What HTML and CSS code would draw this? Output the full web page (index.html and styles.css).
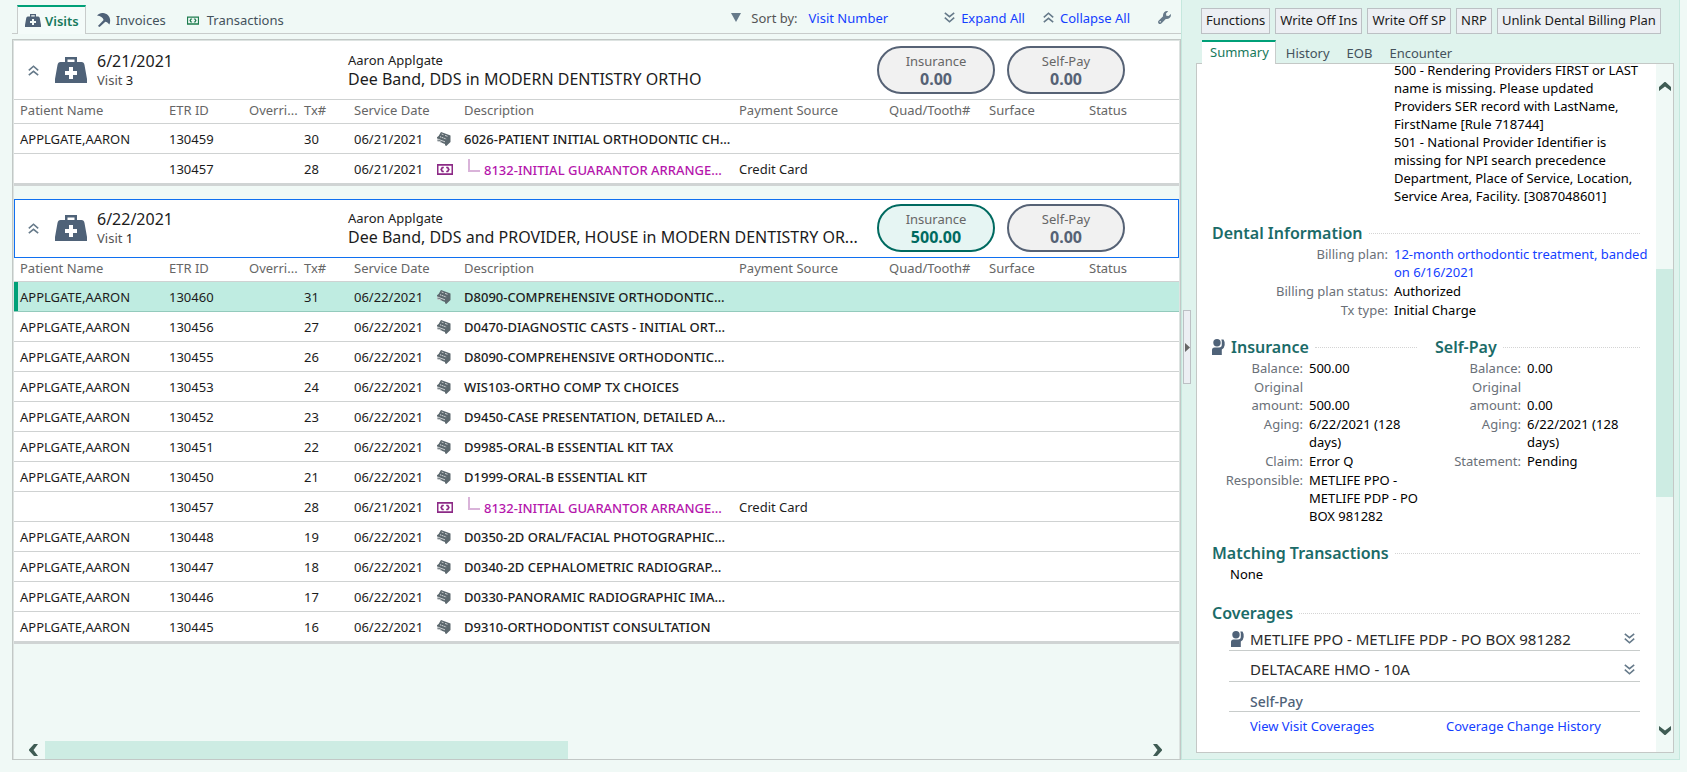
FILE: index.html
```html
<!DOCTYPE html>
<html lang="en">
<head>
<meta charset="utf-8">
<title>Visits</title>
<link rel="stylesheet" href="styles.css">
</head>
<body>
<svg class="sprite" aria-hidden="true">
  <symbol id="bag" viewBox="0 0 32 26">
    <path fill-rule="evenodd" d="M10 5V0h12v5h4.500q2.500 0 3 3L32 22v4H0v-4L2.500 8q.5-3 3-3zM12.500 5h7V2.500h-7zM14 10v4h-4v4h4v4h4v-4h4v-4h-4v-4z"/>
  </symbol>
  <symbol id="umbrella" viewBox="0 0 14 14">
    <path d="M0 2.500C3-.8 8-.8 11 2.200c2.400 2.400 2.700 6 1.400 9.300C11 9.800 9.700 9 8.300 8.700L2.600 14 .9 13 6.600 7C6 4.700 3.500 2.700 0 2.500z"/>
  </symbol>
  <symbol id="cash" viewBox="0 0 16 11">
    <path fill-rule="evenodd" d="M0 0h16v11H0zM1.500 1.800v7.400h13V1.800z"/>
    <path d="M6.800 2.800H4.800L3.200 5.500l1.600 2.700h2V6.800h-.9L5.200 5.500l.7-1.300h.9zM9.200 2.800h2l1.600 2.700-1.600 2.700h-2V6.800h.9l.7-1.300-.7-1.300h-.9z"/>
  </symbol>
  <symbol id="sheets" viewBox="0 0 14 14">
    <path d="M4 0 13.500 3.600V10L9.300 14 8 13.300V12L0 9V8l1-.6L0 6.800V5.200L1.600 4z"/>
    <path fill="none" stroke="#fff" stroke-width=".8" stroke-opacity=".85" d="M4.600 2 6.500 2.700M8 3.400l2.500.9M0 6.800l8 3M0 8.600l4.500 1.700"/>
    <path fill="none" stroke="#fff" stroke-width="1" stroke-dasharray="1.200 1" d="M3.200 4.800 9.500 7.100"/>
  </symbol>
  <symbol id="down" viewBox="0 0 11 11"><path fill="none" stroke="currentColor" stroke-width="1.600" d="M.8.8 5.500 4.600 10.200.8M.8 5.600l4.700 4.200 4.700-4.200"/></symbol>
  <symbol id="up" viewBox="0 0 11 11"><path fill="none" stroke="currentColor" stroke-width="1.600" d="M.8 5.400 5.500 1.200l4.700 4.200M.8 10.200l4.700-3.800 4.700 3.800"/></symbol>
  <symbol id="person" viewBox="0 0 13 16">
    <circle cx="5" cy="3.800" r="3.700"/>
    <path d="M0 16V11q0-2.500 2.500-2.500H7q2.800 0 2.800-2.700V2.200L9.300.4H11.500q1.500 2 1.200 5.600-.3 3-2.900 4.500V16z"/>
  </symbol>
  <symbol id="wrench" viewBox="0 0 13 13">
    <path fill-rule="evenodd" d="M10.200.2 8 2.400l.3 2.300 2.300.4L12.900 3q.4 2.600-1.400 4.100-1.600 1.200-3.700.8L3.600 12.300q-1.600 1.400-3 .1-1.200-1.500.2-3L5.100 5.300Q4.600 2.900 6.200 1.200 7.900-.4 10.200.2zM1.500 10.800a.7.700 0 1 0 1.400 0 .7.700 0 1 0-1.400 0z"/>
  </symbol>
  <symbol id="chev" viewBox="0 0 9 12"><path d="M5 0h4L4.500 6 9 12H5L0 6.500v-1z"/></symbol>
</svg>

<div class="app">
  <main class="left">
    <header class="topbar">
      <nav class="tabs">
        <a class="tab active" href="#visits"><svg class="slate" width="16" height="13"><use href="#bag"/></svg>Visits</a>
        <a class="tab" href="#invoices"><svg class="slate" width="14" height="14"><use href="#umbrella"/></svg>Invoices</a>
        <a class="tab last" href="#transactions"><svg class="green" width="12" height="9"><use href="#cash"/></svg>Transactions</a>
      </nav>
      <div class="tools">
        <svg class="steel" width="10" height="9" viewBox="0 0 10 9"><path d="M0 0h10L5 9z"/></svg>
        <span class="sortlabel">Sort by:</span>
        <a class="sortby" href="#sort">Visit Number</a>
        <a class="tool" href="#expand"><svg class="steel" width="11" height="11"><use href="#down"/></svg>Expand All</a>
        <a class="tool" href="#collapse"><svg class="steel" width="11" height="11"><use href="#up"/></svg>Collapse All</a>
        <button class="plain wrench" aria-label="Settings"><svg class="steel" width="13" height="13"><use href="#wrench"/></svg></button>
      </div>
    </header>

    <section class="list">
      <article class="visit">
        <div class="visit-head">
          <button class="plain toggle" aria-label="Collapse visit 3"><svg class="steel" width="11" height="11"><use href="#up"/></svg></button>
          <svg class="slate" width="32" height="26"><use href="#bag"/></svg>
          <div class="when"><div class="big">6/21/2021</div><div class="muted">Visit <span class="ink">3</span></div></div>
          <div class="who"><div>Aaron Applgate</div><div class="big">Dee Band, DDS in MODERN DENTISTRY ORTHO</div></div>
          <button class="pill">Insurance<b>0.00</b></button>
          <button class="pill">Self-Pay<b>0.00</b></button>
        </div>
        <table class="tx">
          <colgroup><col class="c-name"><col class="c-etr"><col class="c-over"><col class="c-tx"><col class="c-date"><col class="c-icon"><col class="c-desc"><col class="c-pay"><col class="c-quad"><col class="c-surf"><col></colgroup>
          <thead><tr><th>Patient Name</th><th>ETR ID</th><th>Overri...</th><th>Tx#</th><th>Service Date</th><th></th><th>Description</th><th>Payment Source</th><th>Quad/Tooth#</th><th>Surface</th><th>Status</th></tr></thead>
          <tbody>
            <tr><td>APPLGATE,AARON</td><td>130459</td><td></td><td>30</td><td>06/21/2021</td><td><svg class="doc" width="14" height="14"><use href="#sheets"/></svg></td><td class="desc">6026-PATIENT INITIAL ORTHODONTIC CH...</td><td></td><td></td><td></td><td></td></tr>
            <tr><td></td><td>130457</td><td></td><td>28</td><td>06/21/2021</td><td><svg class="plum" width="16" height="11"><use href="#cash"/></svg></td><td class="desc child">8132-INITIAL GUARANTOR ARRANGE...</td><td>Credit Card</td><td></td><td></td><td></td></tr>
          </tbody>
        </table>
      </article>

      <article class="visit">
        <div class="visit-head focused">
          <button class="plain toggle" aria-label="Collapse visit 1"><svg class="steel" width="11" height="11"><use href="#up"/></svg></button>
          <svg class="slate" width="32" height="26"><use href="#bag"/></svg>
          <div class="when"><div class="big">6/22/2021</div><div class="muted">Visit <span class="ink">1</span></div></div>
          <div class="who"><div>Aaron Applgate</div><div class="big">Dee Band, DDS and PROVIDER, HOUSE in MODERN DENTISTRY OR...</div></div>
          <button class="pill due">Insurance<b>500.00</b></button>
          <button class="pill">Self-Pay<b>0.00</b></button>
        </div>
        <table class="tx">
          <colgroup><col class="c-name"><col class="c-etr"><col class="c-over"><col class="c-tx"><col class="c-date"><col class="c-icon"><col class="c-desc"><col class="c-pay"><col class="c-quad"><col class="c-surf"><col></colgroup>
          <thead><tr><th>Patient Name</th><th>ETR ID</th><th>Overri...</th><th>Tx#</th><th>Service Date</th><th></th><th>Description</th><th>Payment Source</th><th>Quad/Tooth#</th><th>Surface</th><th>Status</th></tr></thead>
          <tbody>
            <tr class="selected"><td>APPLGATE,AARON</td><td>130460</td><td></td><td>31</td><td>06/22/2021</td><td><svg class="doc" width="14" height="14"><use href="#sheets"/></svg></td><td class="desc">D8090-COMPREHENSIVE ORTHODONTIC...</td><td></td><td></td><td></td><td></td></tr>
            <tr><td>APPLGATE,AARON</td><td>130456</td><td></td><td>27</td><td>06/22/2021</td><td><svg class="doc" width="14" height="14"><use href="#sheets"/></svg></td><td class="desc">D0470-DIAGNOSTIC CASTS - INITIAL ORT...</td><td></td><td></td><td></td><td></td></tr>
            <tr><td>APPLGATE,AARON</td><td>130455</td><td></td><td>26</td><td>06/22/2021</td><td><svg class="doc" width="14" height="14"><use href="#sheets"/></svg></td><td class="desc">D8090-COMPREHENSIVE ORTHODONTIC...</td><td></td><td></td><td></td><td></td></tr>
            <tr><td>APPLGATE,AARON</td><td>130453</td><td></td><td>24</td><td>06/22/2021</td><td><svg class="doc" width="14" height="14"><use href="#sheets"/></svg></td><td class="desc">WIS103-ORTHO COMP TX CHOICES</td><td></td><td></td><td></td><td></td></tr>
            <tr><td>APPLGATE,AARON</td><td>130452</td><td></td><td>23</td><td>06/22/2021</td><td><svg class="doc" width="14" height="14"><use href="#sheets"/></svg></td><td class="desc">D9450-CASE PRESENTATION, DETAILED A...</td><td></td><td></td><td></td><td></td></tr>
            <tr><td>APPLGATE,AARON</td><td>130451</td><td></td><td>22</td><td>06/22/2021</td><td><svg class="doc" width="14" height="14"><use href="#sheets"/></svg></td><td class="desc">D9985-ORAL-B ESSENTIAL KIT TAX</td><td></td><td></td><td></td><td></td></tr>
            <tr><td>APPLGATE,AARON</td><td>130450</td><td></td><td>21</td><td>06/22/2021</td><td><svg class="doc" width="14" height="14"><use href="#sheets"/></svg></td><td class="desc">D1999-ORAL-B ESSENTIAL KIT</td><td></td><td></td><td></td><td></td></tr>
            <tr><td></td><td>130457</td><td></td><td>28</td><td>06/21/2021</td><td><svg class="plum" width="16" height="11"><use href="#cash"/></svg></td><td class="desc child">8132-INITIAL GUARANTOR ARRANGE...</td><td>Credit Card</td><td></td><td></td><td></td></tr>
            <tr><td>APPLGATE,AARON</td><td>130448</td><td></td><td>19</td><td>06/22/2021</td><td><svg class="doc" width="14" height="14"><use href="#sheets"/></svg></td><td class="desc">D0350-2D ORAL/FACIAL PHOTOGRAPHIC...</td><td></td><td></td><td></td><td></td></tr>
            <tr><td>APPLGATE,AARON</td><td>130447</td><td></td><td>18</td><td>06/22/2021</td><td><svg class="doc" width="14" height="14"><use href="#sheets"/></svg></td><td class="desc">D0340-2D CEPHALOMETRIC RADIOGRAP...</td><td></td><td></td><td></td><td></td></tr>
            <tr><td>APPLGATE,AARON</td><td>130446</td><td></td><td>17</td><td>06/22/2021</td><td><svg class="doc" width="14" height="14"><use href="#sheets"/></svg></td><td class="desc">D0330-PANORAMIC RADIOGRAPHIC IMA...</td><td></td><td></td><td></td><td></td></tr>
            <tr><td>APPLGATE,AARON</td><td>130445</td><td></td><td>16</td><td>06/22/2021</td><td><svg class="doc" width="14" height="14"><use href="#sheets"/></svg></td><td class="desc">D9310-ORTHODONTIST CONSULTATION</td><td></td><td></td><td></td><td></td></tr>
          </tbody>
        </table>
      </article>

      <div class="hscroll">
        <button class="plain hbtn" aria-label="Scroll left"><svg class="arrow" width="9" height="12"><use href="#chev"/></svg></button>
        <div class="htrack"><div class="hthumb"></div></div>
        <button class="plain hbtn" aria-label="Scroll right"><svg class="arrow" width="9" height="12" viewBox="0 0 9 12"><path d="M4 0H0l4.500 6L0 12h4l5-5.500v-1z"/></svg></button>
      </div>
    </section>
  </main>

  <aside class="right">
    <button class="splitter" aria-label="Hide side panel"><svg width="5" height="9" viewBox="0 0 5 9"><path fill="#666" d="M0 0l5 4.500L0 9z"/></svg></button>
    <div class="actions">
      <button class="btn">Functions</button><button class="btn">Write Off Ins</button><button class="btn">Write Off SP</button><button class="btn">NRP</button><button class="btn">Unlink Dental Billing Plan</button>
    </div>
    <nav class="subtabs">
      <a class="subtab active" href="#summary">Summary</a><a class="subtab" href="#history">History</a><a class="subtab" href="#eob">EOB</a><a class="subtab" href="#encounter">Encounter</a>
    </nav>
    <div class="summary">
      <div class="content">
        <div class="errors">
          <p>500 - Rendering Providers FIRST or LAST name is missing. Please updated Providers SER record with LastName, FirstName [Rule 718744]</p>
          <p>501 - National Provider Identifier is missing for NPI search precedence Department, Place of Service, Location, Service Area, Facility. [3087048601]</p>
        </div>

        <h2>Dental Information</h2>
        <dl class="facts wide">
          <dt>Billing plan:</dt><dd><a href="#plan">12-month orthodontic treatment, banded on 6/16/2021</a></dd>
          <dt>Billing plan status:</dt><dd>Authorized</dd>
          <dt>Tx type:</dt><dd>Initial Charge</dd>
        </dl>

        <div class="split">
          <section>
            <h2><svg class="slate" width="13" height="16"><use href="#person"/></svg>Insurance</h2>
            <dl class="facts">
              <dt>Balance:</dt><dd>500.00</dd>
              <dt>Original amount:</dt><dd class="low">500.00</dd>
              <dt>Aging:</dt><dd>6/22/2021 (128 days)</dd>
              <dt>Claim:</dt><dd>Error Q</dd>
              <dt>Responsible:</dt><dd>METLIFE PPO - METLIFE PDP - PO BOX 981282</dd>
            </dl>
          </section>
          <section>
            <h2>Self-Pay</h2>
            <dl class="facts">
              <dt>Balance:</dt><dd>0.00</dd>
              <dt>Original amount:</dt><dd class="low">0.00</dd>
              <dt>Aging:</dt><dd>6/22/2021 (128 days)</dd>
              <dt>Statement:</dt><dd>Pending</dd>
            </dl>
          </section>
        </div>

        <h2>Matching Transactions</h2>
        <p class="none">None</p>

        <h2>Coverages</h2>
        <div class="coverages">
          <div class="cov"><svg class="slate mark" width="13" height="16"><use href="#person"/></svg><span class="name">METLIFE PPO - METLIFE PDP - PO BOX 981282</span><button class="plain" aria-label="Expand"><svg class="steel" width="11" height="11"><use href="#down"/></svg></button></div>
          <div class="cov"><span class="mark"></span><span class="name">DELTACARE HMO - 10A</span><button class="plain" aria-label="Expand"><svg class="steel" width="11" height="11"><use href="#down"/></svg></button></div>
          <div class="cov self"><span class="mark"></span><span class="name">Self-Pay</span></div>
          <div class="links"><a href="#view">View Visit Coverages</a><a href="#changes">Coverage Change History</a></div>
        </div>
      </div>
      <div class="vscroll">
        <button class="plain vbtn" aria-label="Scroll up"><svg class="arrow" width="12" height="9" viewBox="0 0 12 9"><path d="M0 9V5l5.500-5h1L12 5v4L6 4.500z"/></svg></button>
        <div class="vtrack"><div class="vthumb"></div></div>
        <button class="plain vbtn" aria-label="Scroll down"><svg class="arrow" width="12" height="9" viewBox="0 0 12 9"><path d="M0 0v4l5.500 5h1L12 4V0L6 4.500z"/></svg></button>
      </div>
    </div>
  </aside>
</div>
</body>
</html>
```

FILE: styles.css
```css
* { box-sizing: border-box; }

body {
  margin: 0;
  background: #f0f9f6;
  color: #1c1c1c;
  font: 13px/18px "Noto Sans", "Open Sans", sans-serif;
}

p, dl, dd, h2 { margin: 0; }
a { color: #1440ff; text-decoration: none; }
svg { display: block; flex: none; overflow: visible; }
button { font: inherit; color: inherit; cursor: pointer; }
.plain { border: 0; padding: 0; background: none; }
.sprite { position: absolute; width: 0; height: 0; }

.slate { fill: #4f6278; }
.steel { fill: #667a8a; color: #667a8a; }
.green { fill: #1e7d4f; }
.doc { fill: #5c686e; }
.plum { fill: #8c2a86; }
.arrow { fill: #3f5c54; }

.app {
  display: flex;
  height: 100vh;
  min-height: 772px;
  padding: 0 7px 12px 12px;
}

.left { flex: 1; display: flex; flex-direction: column; min-width: 0; }

/* Top bar */
.topbar {
  display: flex;
  justify-content: space-between;
  height: 39px;
  padding: 5px 10px 5px 5px;
  background: linear-gradient(#c8cccb, #c8cccb) 0 33px / 100% 1px no-repeat;
}
.tabs { display: flex; height: 29px; }
.tab {
  display: flex;
  align-items: center;
  gap: 5px;
  color: #44525c;
}
.tab + .tab { padding: 1px 10px 0 11px; }
.tab.last { gap: 8px; }
.tab.active {
  gap: 4px;
  padding: 0 6px 0 7px;
  border: 1px solid #c8cccb;
  border-top: 2px solid #00a078;
  border-bottom: 0;
  background: #f4fbf9;
  color: #17795c;
  font-weight: 600;
}
.tools { display: flex; align-items: center; height: 25px; }
.sortlabel { margin: 0 11px 0 10px; color: #555; }
.sortby { margin-right: 56px; }
.tool { display: flex; align-items: center; gap: 6px; margin-right: 18px; }
.wrench { margin-left: 10px; }

/* Visits list */
.list {
  flex: 1;
  display: flex;
  flex-direction: column;
  min-height: 0;
  border: 1px solid #c2c8c6;
  box-shadow: inset 1px 1px #dde3e1, inset -1px 0 #dde3e1;
}
.visit { margin: 1px 1px 0; border-bottom: 3px solid #d0d4d4; background: #fff; }
.visit + .visit { margin-top: 13px; }
.visit-head {
  display: flex;
  align-items: center;
  height: 59px;
  padding: 0 54px 0 14px;
  border-bottom: 1px solid #cfd2d2;
}
.visit-head.focused { outline: 1px solid #1070f0; outline-offset: -1px; }
.toggle { margin-right: 16px; }
.when { width: 261px; padding-left: 10px; }
.who { flex: 1; min-width: 0; white-space: nowrap; }
.big { font-size: 16px; line-height: 20px; overflow: hidden; text-overflow: ellipsis; }
.muted { color: #555; }
.ink { color: #1c1c1c; }
.pill {
  flex: none;
  width: 118px;
  height: 48px;
  margin-left: 12px;
  padding: 0;
  border: 2px solid #566275;
  border-radius: 24px;
  background: #f1f1f1;
  color: #666;
  line-height: 18px;
}
.pill b { display: block; color: #566275; font-size: 16px; }
.pill.due { border-color: #006a60; background: #e6f5f3; }
.pill.due b { color: #006a60; }

.tx { width: 100%; border-collapse: collapse; table-layout: fixed; }
.c-name { width: 149px; }
.c-etr { width: 80px; }
.c-over { width: 55px; }
.c-tx { width: 50px; }
.c-date { width: 83px; }
.c-icon { width: 27px; }
.c-desc { width: 275px; }
.c-pay { width: 150px; }
.c-quad, .c-surf { width: 100px; }
.tx th, .tx td {
  padding: 0 0 0 6px;
  text-align: left;
  white-space: nowrap;
  border-bottom: 1px solid #cfd2d2;
}
.tx th { height: 23px; padding-bottom: 3px; color: #666; font-weight: 400; }
.tx td { height: 30px; padding-top: 2px; }
.tx tbody tr:last-child td { border-bottom: 0; }
.tx .desc { font-weight: 500; }
.tx .child { color: #b516ac; }
.child::before {
  content: "";
  display: inline-block;
  width: 10px;
  height: 11px;
  margin: 0 4px 3px 4px;
  border: solid #d9b3d9;
  border-width: 0 0 2px 2px;
}
.selected td { background: #bfece1; border-color: #93cabc; }
.selected td:first-child { box-shadow: inset 4px 0 #00a078; }

.hscroll { display: flex; align-items: center; height: 18px; margin-top: auto; padding: 0 18px 0 16px; }
.hbtn { flex: none; }
.htrack { flex: 1; height: 18px; margin: 0 7px; }
.hthumb { width: 47.5%; height: 100%; background: #cdece3; }

/* Side panel */
.right {
  position: relative;
  width: 499px;
  display: flex;
  flex-direction: column;
  padding: 8px 5px 6px 14px;
  border: solid #c5e8de;
  border-width: 0 1px 1px;
  background: #dff3ed;
}
.splitter {
  position: absolute;
  left: 1px;
  top: 310px;
  width: 8px;
  height: 74px;
  padding: 0 0 0 1px;
  border: 1px solid #bcc0c4;
  background: #eceff3;
}
.actions { display: flex; gap: 5px; padding-left: 5px; }
.btn {
  height: 26px;
  padding: 0 4px 2px;
  border: 1px solid #bcc0c4;
  background: #eceff3;
  white-space: nowrap;
}
.subtabs { display: flex; height: 24px; margin: 6px 0 -1px; padding-left: 6px; z-index: 1; }
.subtab { padding: 4px 0 0 17px; color: #44525c; }
.subtab.active {
  padding: 1px 6px 0 8px;
  border-top: 2px solid #00a078;
  border-right: 1px solid #c8cccb;
  background: #fff;
  color: #17795c;
}
.subtab.active + .subtab { padding-left: 10px; }

.summary {
  flex: 1;
  display: flex;
  min-height: 0;
  border: 1px solid #c4c8c6;
  background: #fff;
}
.content { flex: 1; min-width: 0; padding: 0 16px 0 15px; overflow: hidden; color: #000; }
.errors { margin: -3px 0 0; padding-left: 182px; }

h2 {
  display: flex;
  align-items: center;
  gap: 6px;
  height: 24px;
  color: #1b6b68;
  font-size: 16px;
  font-weight: 600;
  white-space: nowrap;
}
h2::after { content: ""; flex: 1; border-top: 1px dotted #d4d4d4; }
.errors + h2 { margin-top: 16px; }

.facts { display: grid; grid-template-columns: 91px 1fr; column-gap: 6px; row-gap: 1px; margin-right: -8px; }
.facts.wide { grid-template-columns: 176px 1fr; margin-right: -14px; }
.facts dt { text-align: right; color: #6a7078; }
.facts .low { align-self: end; }
.split { display: grid; grid-template-columns: 205px 1fr; gap: 18px; margin-top: 16px; }
.split section + section .facts { grid-template-columns: 86px 1fr; margin-right: 0; }
.split + h2 { margin-top: 16px; }
.none { padding-left: 18px; }
.none + h2 { margin-top: 18px; }

.coverages { padding-left: 17px; }
.cov {
  display: flex;
  align-items: center;
  height: 31px;
  padding: 6px 5px 0 2px;
  border-bottom: 1px solid #c8cccb;
  color: #2a2a2a;
  font-size: 15px;
}
.cov:first-child { height: 26px; padding-top: 2px; }
.cov .mark { width: 13px; margin-right: 6px; }
.cov .name { flex: 1; }
.cov.self { height: 30px; padding-top: 11px; color: #4f6278; font-size: 14px; font-weight: 500; }
.links { display: grid; grid-template-columns: 196px 1fr; padding: 5px 0 0 21px; }

.vscroll {
  flex: none;
  width: 17px;
  display: flex;
  flex-direction: column;
  align-items: center;
  padding: 18px 0 17px;
  background: #f0f9f6;
}
.vtrack { flex: 1; width: 17px; padding-top: 178px; }
.vthumb { height: 228px; background: #cdece3; }
```
